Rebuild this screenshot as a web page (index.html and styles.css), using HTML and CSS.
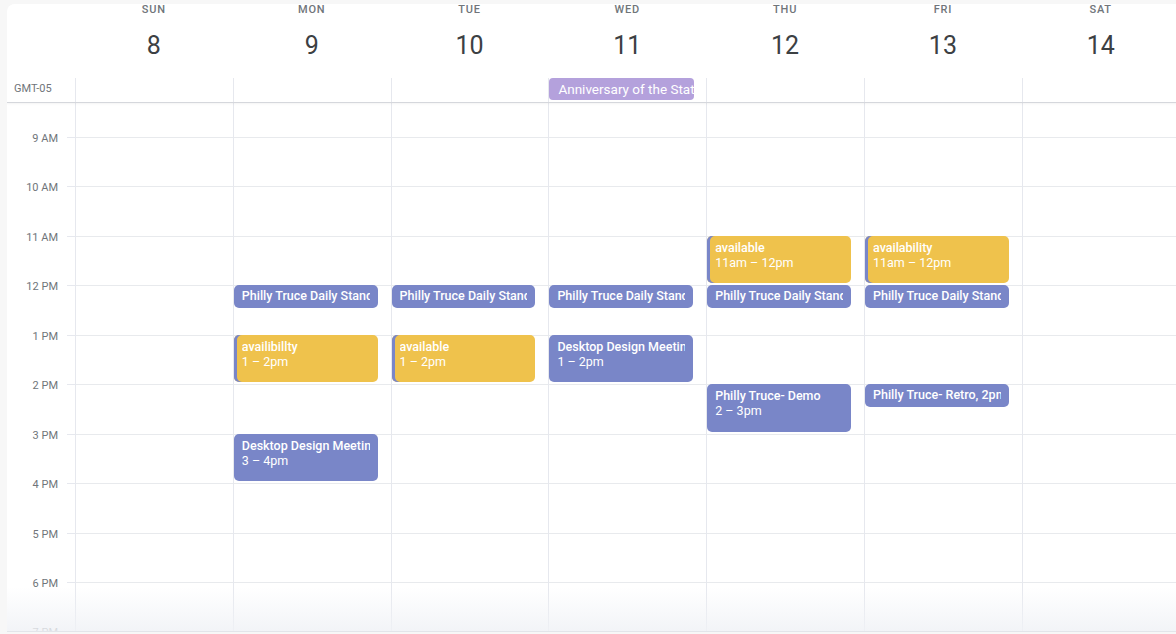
FILE: index.html
```html
<!DOCTYPE html>
<html lang="en">
<head>
  <meta charset="UTF-8">
  <title>Week of the 8th</title>
  <link rel="stylesheet" href="styles.css">
</head>
<body>
  <div class="cal">
    <div class="head">
      <div class="head-days">
        <div class="gutter"></div>
        <div class="day"><span class="dow">SUN</span><span class="num">8</span></div>
        <div class="day"><span class="dow">MON</span><span class="num">9</span></div>
        <div class="day"><span class="dow">TUE</span><span class="num">10</span></div>
        <div class="day"><span class="dow">WED</span><span class="num">11</span></div>
        <div class="day"><span class="dow">THU</span><span class="num">12</span></div>
        <div class="day"><span class="dow">FRI</span><span class="num">13</span></div>
        <div class="day"><span class="dow">SAT</span><span class="num">14</span></div>
      </div>
      <div class="allday">
        <div class="tz">GMT-05</div>
        <div class="allday-cell"></div>
        <div class="allday-cell"></div>
        <div class="allday-cell"></div>
        <div class="allday-cell"><div class="chip">Anniversary of the State</div></div>
        <div class="allday-cell"></div>
        <div class="allday-cell"></div>
        <div class="allday-cell"></div>
      </div>
    </div>
    <div class="scroller">
      <div class="grid" id="grid">
        <div class="times" id="times"></div>
      </div>
    </div>
    <div class="fade"></div>
  </div>

  <script>
    // visible hours: the grid starts at 8 AM and is scrolled a little
    const FIRST_HOUR = 8;
    const LAST_HOUR = 19;
    const HOUR_PX = 49.44;

    // day: 0 = Sunday
    const events = [
      { day: 1, start: 12, end: 12.5, title: "Philly Truce Daily Standup", time: "12pm", color: "blue" },
      { day: 1, start: 13, end: 14, title: "availibillty", time: "1 – 2pm", color: "yellow" },
      { day: 1, start: 15, end: 16, title: "Desktop Design Meeting", time: "3 – 4pm", color: "blue" },
      { day: 2, start: 12, end: 12.5, title: "Philly Truce Daily Standup", time: "12pm", color: "blue" },
      { day: 2, start: 13, end: 14, title: "available", time: "1 – 2pm", color: "yellow" },
      { day: 3, start: 12, end: 12.5, title: "Philly Truce Daily Standup", time: "12pm", color: "blue" },
      { day: 3, start: 13, end: 14, title: "Desktop Design Meeting", time: "1 – 2pm", color: "blue" },
      { day: 4, start: 11, end: 12, title: "available", time: "11am – 12pm", color: "yellow" },
      { day: 4, start: 12, end: 12.5, title: "Philly Truce Daily Standup", time: "12pm", color: "blue" },
      { day: 4, start: 14, end: 15, title: "Philly Truce- Demo", time: "2 – 3pm", color: "blue" },
      { day: 5, start: 11, end: 12, title: "availability", time: "11am – 12pm", color: "yellow" },
      { day: 5, start: 12, end: 12.5, title: "Philly Truce Daily Standup", time: "12pm", color: "blue" },
      { day: 5, start: 14, end: 14.5, title: "Philly Truce- Retro", time: "2pm", color: "blue" }
    ];

    function hourLabel(h) {
      const suffix = h < 12 ? 'AM' : 'PM';
      const n = h % 12 === 0 ? 12 : h % 12;
      return n + ' ' + suffix;
    }

    function renderGrid() {
      const grid = document.getElementById('grid');
      const times = document.getElementById('times');

      for (let h = FIRST_HOUR; h <= LAST_HOUR; h++) {
        const slot = document.createElement('div');
        slot.className = 'time-slot';
        // the first hour's label sits under the header, so skip it
        if (h > FIRST_HOUR) {
          slot.innerHTML = `<span class="time-label">${hourLabel(h)}</span>`;
        }
        times.appendChild(slot);
      }

      for (let d = 0; d < 7; d++) {
        const col = document.createElement('div');
        col.className = 'col';
        for (let h = FIRST_HOUR; h <= LAST_HOUR; h++) {
          const slot = document.createElement('div');
          slot.className = 'slot';
          col.appendChild(slot);
        }

        events.filter(ev => ev.day === d).forEach(ev => {
          const el = document.createElement('div');
          const short = ev.end - ev.start <= 0.5;
          el.className = `event ${ev.color}` + (short ? ' short' : '');
          el.style.top = ((ev.start - FIRST_HOUR) * HOUR_PX) + 'px';
          el.style.height = ((ev.end - ev.start) * HOUR_PX - 2) + 'px';
          if (short) {
            el.innerHTML = `<div class="ev-title">${ev.title}, ${ev.time}</div>`;
          } else {
            el.innerHTML = `<div class="ev-title">${ev.title}</div><div class="ev-time">${ev.time}</div>`;
          }
          col.appendChild(el);
        });

        grid.appendChild(col);
      }
    }

    renderGrid();
  </script>
</body>
</html>
```

FILE: styles.css
```css
* {
  margin: 0;
  padding: 0;
  box-sizing: border-box;
}

body {
  background: #f7f7f7;
  font-family: Roboto, 'Liberation Sans', sans-serif;
  color: #3c4043;
  height: 634px;
  overflow: hidden;
}

.cal {
  position: relative;
  margin: 4px 0 0 7px;
  width: 1180px;
  height: 628px;
  background: #fff;
  border-top-left-radius: 8px;
  border-bottom: 1px solid #e3e5ea;
  display: flex;
  flex-direction: column;
  overflow: hidden;
}

/* header: weekday names and dates */
.head {
  position: relative;
  z-index: 2;
  background: #fff;
  border-bottom: 1px solid #d5d7dc;
  box-shadow: 0 1px 2px rgba(60, 64, 67, 0.06);
}

.head-days,
.allday,
.grid {
  display: grid;
  grid-template-columns: 68px repeat(7, 157.8px);
}

.day {
  display: flex;
  flex-direction: column;
  align-items: center;
  height: 74px;
}

.dow {
  font-size: 11px;
  font-weight: 500;
  letter-spacing: 0.8px;
  color: #70757a;
  line-height: 12px;
}

.num {
  font-size: 25px;
  font-weight: 400;
  color: #3c4043;
  line-height: 30px;
  margin-top: 15px;
}

.allday {
  height: 24px;
}

.tz {
  font-size: 11px;
  color: #70757a;
  padding: 4px 0 0 7px;
}

.allday-cell {
  border-left: 1px solid #e6e8ee;
}

.chip {
  width: 145px;
  height: 22px;
  background: #b4a1dc;
  color: #fff;
  font-size: 13.5px;
  line-height: 22px;
  padding-left: 9px;
  border-radius: 4px;
  white-space: nowrap;
  overflow: hidden;
}

/* scrolled time grid */
.scroller {
  flex: 1;
  overflow: hidden;
}

.grid {
  margin-top: -15.4px;
}

.times {
  position: relative;
}

.time-slot {
  position: relative;
  height: 49.44px;
}

.time-slot::after {
  content: '';
  position: absolute;
  top: 0;
  right: 0;
  width: 8px;
  border-top: 1px solid #e6e8ee;
}

.time-label {
  position: absolute;
  top: -5px;
  right: 17px;
  font-size: 11px;
  line-height: 14px;
  color: #70757a;
  white-space: nowrap;
}

.col {
  position: relative;
  border-left: 1px solid #e6e8ee;
}

.slot {
  height: 49.44px;
  border-top: 1px solid #e8eaed;
}

/* events */
.event {
  position: absolute;
  left: 0;
  right: 13px;
  border-radius: 5px;
  color: #fff;
  font-size: 12.5px;
  line-height: 15px;
  padding: 4px 8px 0 8px;
  overflow: hidden;
  white-space: nowrap;
}

.event.short {
  padding-top: 3px;
}

.event.blue {
  background: #7986c8;
}

.event.yellow {
  background: #efc24c;
  box-shadow: inset 3px 0 0 #7986c8;
}

.ev-title {
  font-weight: 500;
  overflow: hidden;
}

.ev-time {
  font-weight: 400;
}

/* soft fade at the bottom edge */
.fade {
  position: absolute;
  left: 0;
  right: 0;
  bottom: 0;
  height: 44px;
  background: linear-gradient(to bottom, rgba(246, 247, 250, 0), rgba(240, 242, 246, 0.85));
  pointer-events: none;
  z-index: 3;
}
```
